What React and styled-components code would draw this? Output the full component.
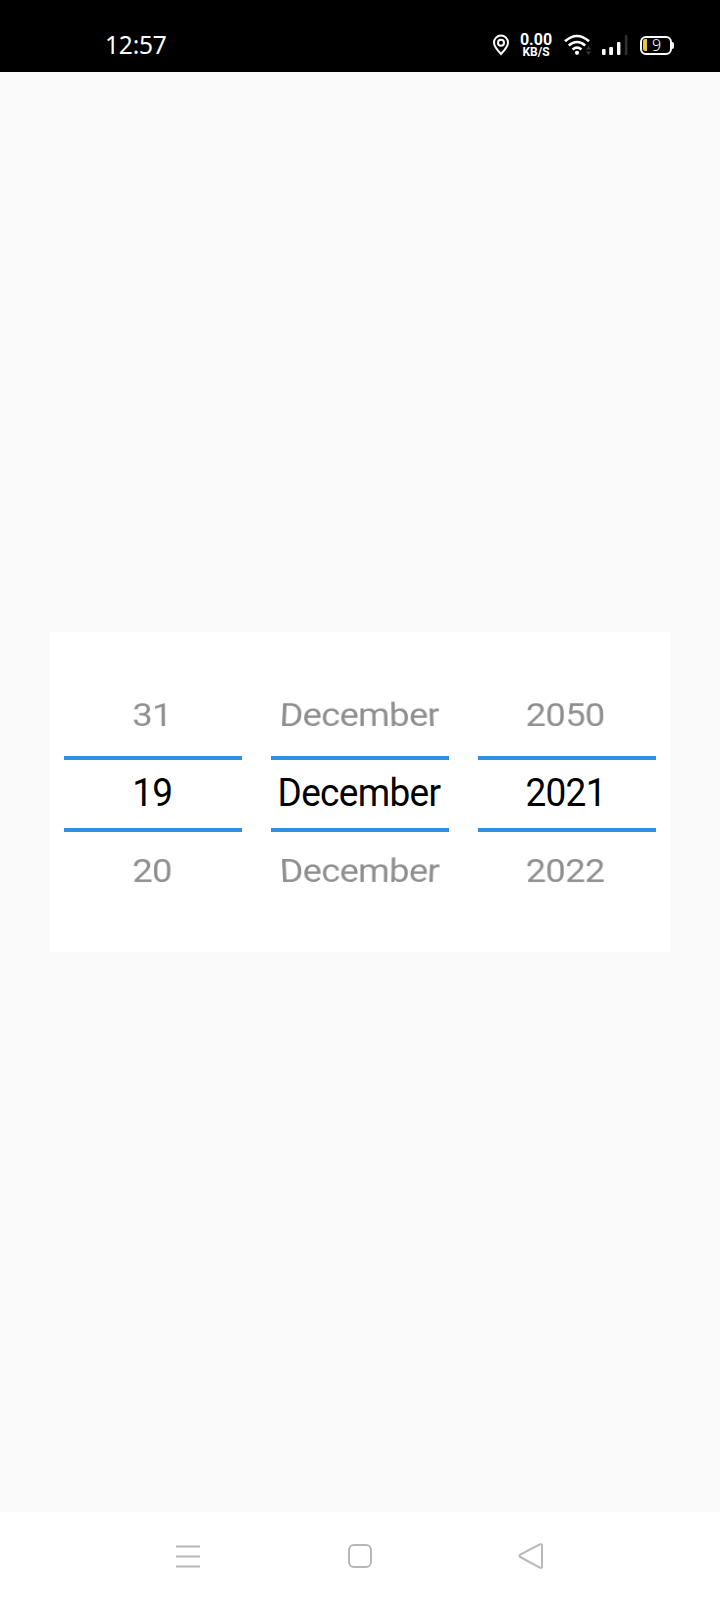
import React from "react";
import styled, { createGlobalStyle } from "styled-components";

const GlobalStyle = createGlobalStyle`
  * { box-sizing: border-box; }
  body { margin: 0; background: #fafafa; font-family: Roboto, "Liberation Sans", sans-serif; }
`;

const Screen = styled.div`
  display: flex;
  flex-direction: column;
  width: 720px;
  height: 1600px;
  overflow: hidden;
  background: #fafafa;
`;

const StatusBar = styled.header`
  display: flex;
  align-items: center;
  justify-content: space-between;
  height: 72px;
  padding: 18px 46px 0 105px;
  background: #000;
  color: #fff;
`;

const Clock = styled.span`
  font-family: "Noto Sans", sans-serif;
  font-size: 24.5px;
  line-height: 30px;
  letter-spacing: -0.2px;
`;

const StatusIcons = styled.div`
  display: flex;
  align-items: center;
  height: 24px;
`;

const NetSpeed = styled.div`
  display: flex;
  flex-direction: column;
  align-items: center;
  width: 34px;
  margin: 0 11px 0 9px;
  padding-top: 1px;
  font-weight: 700;
`;

const SpeedValue = styled.span`
  font-size: 16px;
  line-height: 13px;
`;

const SpeedUnit = styled.span`
  font-size: 12px;
  line-height: 12px;
`;

const WifiIcon = styled.svg`
  margin-right: 10px;
`;

const SignalIcon = styled.svg`
  margin-right: 11px;
`;

const Battery = styled.div`
  display: flex;
  align-items: center;
  width: 34px;
  height: 20px;
`;

const BatteryCell = styled.div`
  display: flex;
  align-items: center;
  width: 32px;
  height: 19px;
  padding: 1px;
  border: 2px solid #fff;
  border-radius: 6px;
`;

const BatteryCharge = styled.div`
  width: 4px;
  height: 12px;
  border-radius: 2px 0 0 2px;
  background: #e8c63c;
`;

const BatteryLevel = styled.span`
  flex: 1;
  padding: 0 3px 1px 0;
  text-align: center;
  font: 300 16px/14px "Noto Sans", sans-serif;
`;

const BatteryTip = styled.div`
  width: 2px;
  height: 7px;
  border-radius: 0 2px 2px 0;
  background: #fff;
`;

const Content = styled.main`
  display: flex;
  flex: 1;
  align-items: center;
  justify-content: center;
`;

const DatePicker = styled.section`
  display: grid;
  grid-template-columns: repeat(3, 1fr);
  width: 620px;
  height: 320px;
  background: #fff;
`;

const Wheel = styled.div`
  display: flex;
  flex-direction: column;
  align-items: center;
  justify-content: center;
  padding: 4px 14.5px 0 14.4px;
  font-size: 37px;
  letter-spacing: -0.7px;
`;

const WheelItem = styled.div`
  display: flex;
  align-items: center;
  justify-content: center;
  height: 79px;
  color: #8f8f8f;
  line-height: 42px;
  transform: ${(p) =>
    `perspective(700px) translate(-1px, ${p.$tilt > 0 ? -1.5 : -0.5}px) rotateX(${p.$tilt}deg) scale(0.98, 0.96)`};
`;

const Selection = styled.div`
  display: flex;
  align-items: center;
  justify-content: center;
  align-self: stretch;
  height: 76px;
  border: solid #3090e0;
  border-width: 4px 0;
  color: #000;
  line-height: 42px;
`;

const SelectedText = styled.span`
  transform: translate(-1px, -1px) scaleY(1.07);
`;

const NavBar = styled.nav`
  display: flex;
  align-items: center;
  justify-content: center;
  height: 88px;
  background: #fff;
`;

const NavButton = styled.button`
  display: flex;
  align-items: center;
  justify-content: center;
  width: 172px;
  height: 88px;
  padding: 0;
  border: 0;
  background: transparent;
`;

const NavIcon = ({ children }) => (
  <NavButton>
    <svg width="28" height="28" viewBox="0 0 28 28" fill="none" stroke="#b8b8b8" strokeWidth="2" strokeLinejoin="round">
      {children}
    </svg>
  </NavButton>
);

const wheels = [
  { id: "day", values: ["31", "19", "20"] },
  { id: "month", values: ["December", "December", "December"] },
  { id: "year", values: ["2050", "2021", "2022"] },
];

export default function App() {
  return (
    <Screen>
      <GlobalStyle />
      <StatusBar>
        <Clock>12:57</Clock>
        <StatusIcons>
          <svg width="18" height="22" viewBox="0 0 18 22" fill="none" stroke="#fff" strokeWidth="2">
            <path d="M9 20 C6 17 2 12.8 2 8.6 A7 7 0 0 1 16 8.6 C16 12.8 12 17 9 20Z" />
            <circle cx="9" cy="8.8" r="3" />
          </svg>
          <NetSpeed>
            <SpeedValue>0.00</SpeedValue>
            <SpeedUnit>KB/S</SpeedUnit>
          </NetSpeed>
          <WifiIcon width="28" height="22" viewBox="0 0 28 22" fill="none">
            <g stroke="#fff" strokeWidth="2.6">
              <path d="M1 7.2 Q13 -3.2 25 7.2" />
              <path d="M4.8 11.4 Q13 4.6 21.2 11.4" />
              <path d="M8.6 15.4 Q13 11.8 17.4 15.4" />
            </g>
            <circle cx="13" cy="18.8" r="2.1" fill="#fff" />
            <path d="M22 15.4 L24.5 12 L27 15.4Z M22 17.6 L24.5 21 L27 17.6Z" fill="#383838" />
          </WifiIcon>
          <SignalIcon width="27" height="22" viewBox="0 0 27 22" fill="#fff">
            <rect x="0" y="15" width="3.6" height="6" rx="1" />
            <rect x="7.2" y="13" width="3.8" height="8" rx="1" />
            <rect x="15" y="8" width="3.4" height="13" rx="1" />
            <rect x="22.8" y="1" width="2.7" height="20" rx="1" fill="#303030" />
          </SignalIcon>
          <Battery>
            <BatteryCell>
              <BatteryCharge />
              <BatteryLevel>9</BatteryLevel>
            </BatteryCell>
            <BatteryTip />
          </Battery>
        </StatusIcons>
      </StatusBar>
      <Content>
        <DatePicker>
          {wheels.map(({ id, values: [previous, current, next] }) => (
            <Wheel key={id}>
              <WheelItem $tilt={24}>{previous}</WheelItem>
              <Selection>
                <SelectedText>{current}</SelectedText>
              </Selection>
              <WheelItem $tilt={-24}>{next}</WheelItem>
            </Wheel>
          ))}
        </DatePicker>
      </Content>
      <NavBar>
        <NavIcon>
          <path d="M2 4.5H26M2 14.5H26M2 24.5H26" />
        </NavIcon>
        <NavIcon>
          <rect x="3" y="3" width="22" height="22" rx="5" />
        </NavIcon>
        <NavIcon>
          <path d="M2.2 12.7 L21.8 2.3 Q24 1.6 24 4 V24 Q24 26.4 21.8 25.7 L2.2 15 Q0.6 13.8 2.2 12.7Z" />
        </NavIcon>
      </NavBar>
    </Screen>
  );
}
